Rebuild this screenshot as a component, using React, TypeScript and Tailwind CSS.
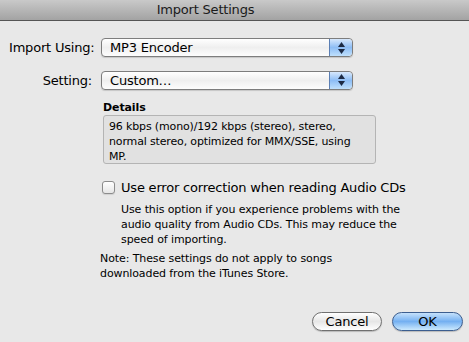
const font = { fontFamily: '"DejaVu Sans", "Liberation Sans", sans-serif' };

function Stepper() {
  return (
    <div className="w-[23px] h-full flex flex-col items-center justify-center gap-[2px] rounded-r-[4px] border-l border-[#5b7fb4] bg-gradient-to-b from-[#d7e8fc] via-[#8dbdf5] to-[#bfe0fc]">
      <svg width="7" height="5" viewBox="0 0 7 5"><path d="M3.5 0 L7 5 L0 5 Z" fill="#1c2a44" /></svg>
      <svg width="7" height="5" viewBox="0 0 7 5"><path d="M0 0 L7 0 L3.5 5 Z" fill="#1c2a44" /></svg>
    </div>
  );
}

function Popup({ value }: { value: string }) {
  return (
    <div className="w-[252px] h-[19px] flex items-stretch rounded-[4px] border border-[#7d7d7d] bg-gradient-to-b from-[#ffffff] via-[#efefef] to-[#fdfdfd] shadow-[0_1px_1px_rgba(0,0,0,0.15)]">
      <div className="flex-1 pl-[8px] text-[13px] leading-[17px] tracking-[-0.2px] text-black">{value}</div>
      <Stepper />
    </div>
  );
}

export default function App() {
  return (
    <div className="w-[469px] h-[342px] bg-[#e8e8e8] flex flex-col text-black" style={font}>
      <div className="h-[21px] shrink-0 border-b border-[#555555] bg-gradient-to-b from-[#c9c9c9] to-[#a3a3a3] flex items-center justify-center pr-[58px] text-[13px] tracking-[-0.2px] text-[#1a1a1a]">
        Import Settings
      </div>

      <div className="flex flex-col pl-[9px] pt-[17px]">
        <div className="grid grid-cols-[83px_252px] gap-x-[9px] gap-y-[13px] items-center">
          <div className="text-[13px] tracking-[-0.2px] text-right whitespace-nowrap">Import Using:</div>
          <Popup value="MP3 Encoder" />
          <div className="text-[13px] tracking-[-0.2px] text-right">Setting:</div>
          <Popup value="Custom…" />
        </div>

        <div className="ml-[91px] mt-[11px] flex flex-col">
          <div className="ml-[3px] text-[11px] font-bold leading-[13px] tracking-[-0.1px]">Details</div>
          <div className="mt-[1px] ml-[3px] w-[273px] h-[49px] rounded-[3px] border border-[#b4b4b4] bg-[#e1e1e1] pl-[5px] pr-[4px] pt-[3px] text-[11px] leading-[15px] tracking-[-0.15px]">
            96 kbps (mono)/192 kbps (stereo), stereo, normal stereo, optimized for MMX/SSE, using MP.
          </div>

          <div className="mt-[17px] ml-[2px] h-[13px] flex items-center gap-[6px]">
            <div className="w-[13px] h-[13px] shrink-0 rounded-[3px] border border-[#8c8c8c] bg-gradient-to-b from-[#ffffff] to-[#e6e6e6] shadow-[0_1px_1px_rgba(0,0,0,0.1)]" />
            <div className="text-[13px] leading-[13px] tracking-[-0.2px] whitespace-nowrap">Use error correction when reading Audio CDs</div>
          </div>
          <div className="ml-[21px] mt-[8px] w-[295px] text-[11px] leading-[15px] tracking-[-0.1px]">
            Use this option if you experience problems with the audio quality from Audio CDs. This may reduce the speed of importing.
          </div>

          <div className="mt-[4px] w-[260px] text-[11px] leading-[15px] tracking-[-0.1px]">
            Note: These settings do not apply to songs downloaded from the iTunes Store.
          </div>
        </div>
      </div>

      <div className="mt-auto mb-[11px] mr-[6px] flex justify-end gap-[10px]">
        <button className="w-[70px] h-[19px] rounded-full border border-[#707070] bg-gradient-to-b from-[#ffffff] via-[#e6e6e6] to-[#ffffff] text-[13px] leading-[17px] tracking-[-0.2px] shadow-[0_1px_1px_rgba(0,0,0,0.2)]">
          Cancel
        </button>
        <button className="w-[71px] h-[19px] rounded-full border border-[#3c5e8f] bg-gradient-to-b from-[#c5e1fb] via-[#74b0f1] to-[#cbe9fd] text-[13px] leading-[17px] tracking-[-0.2px] shadow-[0_1px_1px_rgba(0,0,0,0.2)]">
          OK
        </button>
      </div>
    </div>
  );
}
